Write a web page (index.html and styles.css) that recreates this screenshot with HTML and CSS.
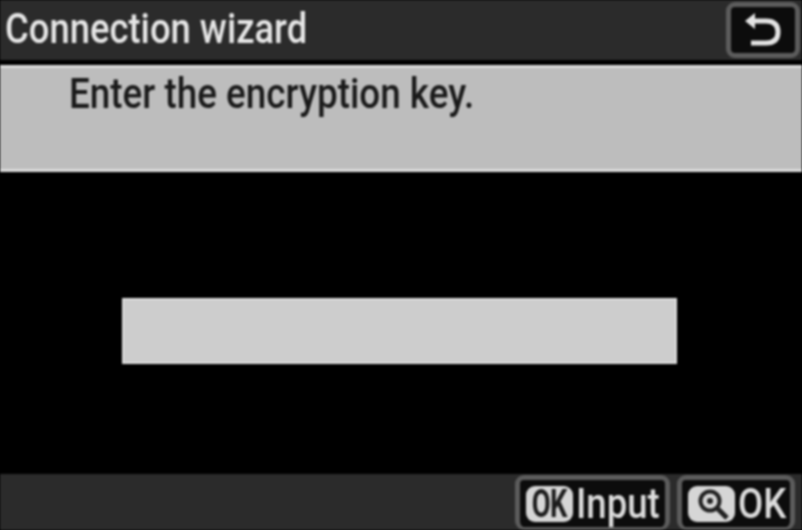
FILE: index.html
```html
<!DOCTYPE html>
<html>
<head>
<meta charset="utf-8">
<title>Connection wizard</title>
<link rel="stylesheet" href="styles.css">
</head>
<body>
<div class="screen">
  <div class="top-bar">
    <div class="title">Connection wizard</div>
    <div class="back-button">
      <svg width="44" height="40" viewBox="0 0 44 40">
        <path d="M8 11 L25 11 Q37 11 37 22 Q37 33 25 33 L10 33" fill="none" stroke="#e4e4e4" stroke-width="5"/>
        <path d="M14 3 L14 19 L4 11 Z" fill="#e4e4e4"/>
      </svg>
    </div>
  </div>
  <div class="message">
    <div class="message-text">Enter the encryption key.</div>
  </div>
  <div class="main">
    <div class="key-field"></div>
  </div>
  <div class="bottom-bar">
    <div class="hint hint-input">
      <span class="ok-badge"><span class="ok-label">OK</span></span>
      <span class="hint-text">Input</span>
    </div>
    <div class="hint hint-ok">
      <span class="zoom-badge">
        <svg width="44" height="34" viewBox="0 0 44 34">
          <circle cx="20" cy="14" r="9.500" fill="none" stroke="#222" stroke-width="4"/>
          <circle cx="20" cy="14" r="3" fill="#222"/>
          <path d="M27 21 L37 31" stroke="#222" stroke-width="5"/>
        </svg>
      </span>
      <span class="hint-text">OK</span>
    </div>
  </div>
</div>
</body>
</html>
```

FILE: styles.css
```css
html, body {
  margin: 0;
  padding: 0;
  background: #000;
}
.screen {
  display: flex;
  flex-direction: column;
  width: 802px;
  height: 530px;
  overflow: hidden;
  font-family: "Roboto", "Liberation Sans", sans-serif;
  filter: blur(1px);
}
.top-bar {
  display: flex;
  align-items: flex-end;
  justify-content: space-between;
  box-sizing: border-box;
  height: 60px;
  padding: 0 2px 2px 5px;
  background: #2b2b2b;
  margin-bottom: 5px;
}
.title {
  width: 301px;
  font-size: 42px;
  font-weight: 500;
  line-height: 58px;
  white-space: nowrap;
  transform: scaleX(0.867);
  transform-origin: left center;
  color: #e6e6e6;
}
.back-button {
  display: flex;
  align-items: center;
  justify-content: center;
  box-sizing: border-box;
  width: 74px;
  height: 56px;
  border: 5px solid #5c5c5c;
  border-radius: 9px;
  background: #0c0c0c;
}
.message {
  box-sizing: border-box;
  height: 107px;
  padding: 0 0 0 69px;
  background: #bdbdbd;
  border-top: 3px solid #dcdcdc;
  border-bottom: 3px solid #dcdcdc;
}
.message-text {
  font-size: 42px;
  font-weight: 500;
  line-height: 52px;
  white-space: nowrap;
  transform: scaleX(0.877);
  transform-origin: left center;
  color: #1a1a1a;
}
.main {
  flex: 1;
  display: flex;
  align-items: flex-start;
  padding: 126px 0 0 122px;
  background: #000;
}
.key-field {
  box-sizing: border-box;
  width: 555px;
  height: 66px;
  background: #cdcdcd;
  border: 2px solid #dedede;
}
.bottom-bar {
  display: flex;
  align-items: flex-end;
  justify-content: flex-end;
  gap: 7px;
  box-sizing: border-box;
  height: 56px;
  padding-right: 7px;
  background: #2b2b2b;
}
.hint {
  display: flex;
  align-items: center;
  box-sizing: border-box;
  height: 55px;
  padding: 0 0 0 6px;
  border: 5px solid #5c5c5c;
  border-bottom-width: 3px;
  border-radius: 9px;
  background: #0c0c0c;
}
.hint-input {
  width: 155px;
}
.hint-ok {
  width: 118px;
}
.hint-text {
  font-size: 42px;
  font-weight: 500;
  white-space: nowrap;
  margin-left: 3px;
  transform: scaleX(0.87);
  transform-origin: left center;
  color: #dcdcdc;
}
.ok-badge {
  display: flex;
  align-items: center;
  justify-content: center;
  flex-shrink: 0;
  width: 47px;
  height: 36px;
  border-radius: 9px;
  background: #d6d6d6;
  color: #1c1c1c;
}
.ok-label {
  font-size: 38px;
  font-weight: 700;
  letter-spacing: -1px;
  transform: scaleX(0.72);
}
.zoom-badge {
  display: flex;
  align-items: center;
  justify-content: center;
  flex-shrink: 0;
  width: 47px;
  height: 36px;
  border-radius: 9px;
  background: #d6d6d6;
}
```
